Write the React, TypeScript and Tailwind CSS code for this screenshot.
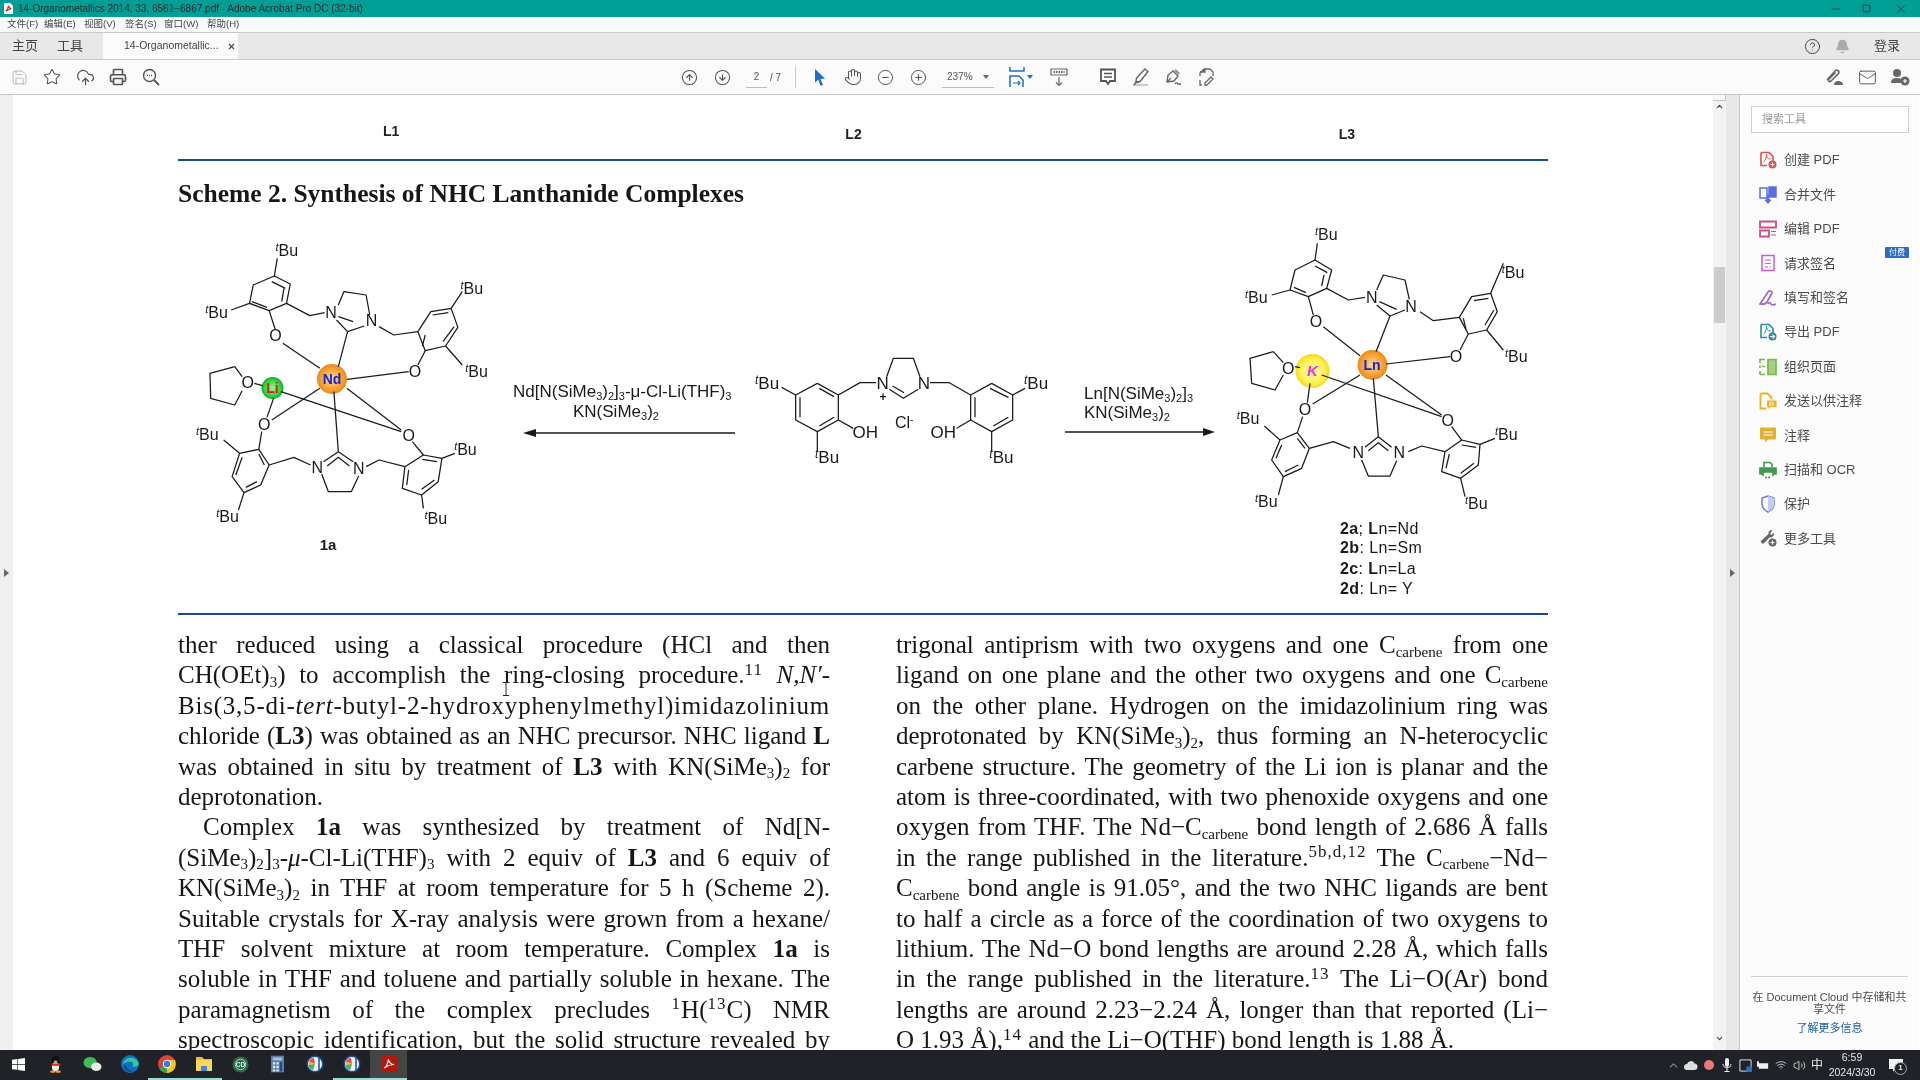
import { ReactNode } from "react";
import {
  Bell,
  ChevronDown,
  ChevronUp,
  CircleArrowDown,
  CircleArrowUp,
  CircleHelp,
  CircleMinus,
  CirclePlus,
  CloudUpload,
  Hand,
  Mail,
  Minus,
  Printer,
  Save,
  Square,
  Star,
  Volume2,
  Wifi,
  X,
} from "lucide-react";

const CJK = "font-['Liberation_Sans','Noto_Sans_CJK_SC',sans-serif]";

type Mapper = (x: number, y: number) => [number, number];
const mapA: Mapper = (x, y) => [170 + x / 2.703, 220 + y / 3];
const mapB: Mapper = (x, y) => [730 + x / 3, 340 + y / 3];
const mapC: Mapper = (x, y) => [1220 + x / 3, 210 + y / 3];

const Bonds = ({ map, lines }: { map: Mapper; lines: number[][] }) => (
  <g fill="none" stroke="#1a1a1a" strokeWidth="1.25" strokeLinejoin="round">
    {lines.map((l, i) => {
      const pts: string[] = [];
      for (let k = 0; k < l.length; k += 2) pts.push(map(l[k], l[k + 1]).join(","));
      return <polyline key={i} points={pts.join(" ")} />;
    })}
  </g>
);

const Atoms = ({ map, items, size = 16 }: { map: Mapper; items: [string, number, number][]; size?: number }) => (
  <g fontSize={size} fill="#1a1a1a">
    {items.map(([t, x, y], i) => {
      const [px, py] = map(x, y);
      if (t === "tBu") {
        return (
          <text key={i} x={px} y={py}>
            <tspan fontSize={size - 5} fontStyle="italic" dy="-5">t</tspan>
            <tspan dy="5">Bu</tspan>
          </text>
        );
      }
      return (
        <text key={i} x={px} y={py} textAnchor="middle">
          {t}
        </text>
      );
    })}
  </g>
);

const molA = [
  [282, 168, 325, 192, 315, 250, 268, 272, 215, 250, 225, 195, 282, 168],
  [275, 185, 312, 205],
  [308, 205, 302, 245],
  [222, 245, 262, 262],
  [282, 168, 290, 115],
  [215, 250, 165, 270],
  [315, 250, 378, 287, 418, 278],
  [455, 255, 470, 215, 530, 225, 540, 285],
  [450, 300, 480, 335, 525, 318],
  [455, 290, 495, 305],
  [268, 272, 285, 330],
  [305, 370, 405, 445],
  [480, 335, 455, 440],
  [565, 320, 605, 345, 670, 335],
  [670, 335, 705, 275, 760, 265, 778, 322, 745, 378, 690, 392, 670, 335],
  [710, 285, 752, 278],
  [768, 320, 738, 365],
  [682, 378, 690, 345],
  [760, 265, 790, 215],
  [745, 378, 790, 435],
  [690, 392, 670, 435],
  [645, 455, 478, 478],
  [175, 440, 108, 460, 110, 535, 175, 555, 195, 512],
  [175, 440, 195, 470],
  [228, 490, 250, 497],
  [280, 535, 262, 592],
  [275, 600, 405, 505],
  [300, 515, 625, 635],
  [478, 505, 625, 630],
  [443, 515, 455, 695],
  [248, 635, 240, 688],
  [240, 688, 268, 735, 245, 795, 200, 818, 168, 770, 188, 700, 240, 688],
  [240, 702, 255, 735],
  [235, 785, 205, 802],
  [178, 765, 195, 712],
  [188, 700, 145, 660],
  [200, 818, 185, 870],
  [268, 735, 335, 712, 380, 735],
  [410, 762, 428, 815, 490, 815, 510, 768],
  [415, 725, 455, 695, 495, 725],
  [425, 738, 455, 712, 485, 738],
  [530, 740, 565, 720, 635, 740],
  [635, 740, 685, 705, 735, 715, 725, 785, 680, 825, 628, 805, 635, 740],
  [682, 718, 722, 725],
  [715, 780, 680, 808],
  [640, 795, 645, 750],
  [655, 665, 685, 705],
  [735, 715, 770, 700],
  [680, 825, 685, 865],
];

const molB = [
  [262, 130, 325, 165, 325, 240, 262, 275, 197, 240, 197, 165, 262, 130],
  [268, 145, 312, 170],
  [312, 232, 268, 258],
  [210, 232, 210, 172],
  [197, 165, 155, 142],
  [262, 275, 262, 335],
  [325, 240, 370, 265],
  [325, 165, 390, 128, 438, 128],
  [470, 110, 490, 55, 550, 55, 570, 110],
  [478, 148, 520, 175, 565, 148],
  [488, 138, 522, 158],
  [600, 128, 658, 128, 722, 165],
  [785, 130, 848, 165, 848, 240, 785, 275, 722, 240, 722, 165, 785, 130],
  [780, 145, 835, 172],
  [835, 232, 790, 258],
  [735, 232, 735, 172],
  [848, 165, 885, 145],
  [785, 275, 785, 335],
  [722, 240, 680, 265],
];

const molC = [
  [285, 150, 335, 180, 320, 235, 265, 260, 210, 240, 225, 180, 285, 150],
  [285, 168, 322, 188],
  [312, 195, 305, 228],
  [222, 232, 258, 248],
  [285, 150, 292, 100],
  [210, 240, 155, 255],
  [320, 235, 385, 270, 435, 262],
  [470, 240, 490, 195, 555, 210, 568, 268],
  [470, 285, 510, 318, 555, 300],
  [478, 275, 530, 298],
  [265, 260, 280, 315],
  [310, 350, 420, 437],
  [510, 318, 468, 425],
  [600, 305, 640, 332, 718, 322],
  [718, 322, 755, 260, 812, 250, 832, 305, 800, 360, 745, 372, 718, 322],
  [762, 272, 805, 265],
  [822, 300, 795, 345],
  [738, 358, 730, 325],
  [812, 250, 850, 160],
  [800, 360, 850, 420],
  [745, 372, 720, 420],
  [690, 440, 498, 462],
  [160, 425, 90, 445, 95, 520, 165, 540, 190, 495],
  [160, 425, 190, 458],
  [225, 470, 240, 473],
  [270, 520, 262, 578],
  [278, 582, 420, 495],
  [305, 495, 665, 620],
  [498, 495, 665, 615],
  [460, 505, 475, 680],
  [248, 620, 232, 668],
  [232, 668, 268, 715, 245, 775, 190, 800, 155, 750, 180, 690, 232, 668],
  [232, 685, 255, 715],
  [235, 765, 195, 785],
  [168, 745, 185, 705],
  [180, 690, 133, 648],
  [190, 800, 175, 855],
  [268, 715, 340, 695, 390, 715],
  [425, 750, 445, 798, 510, 798, 530, 752],
  [435, 712, 475, 680, 515, 712],
  [445, 722, 475, 698, 505, 722],
  [565, 725, 605, 708, 675, 725],
  [675, 725, 725, 690, 780, 703, 775, 765, 722, 805, 665, 785, 675, 725],
  [725, 705, 768, 712],
  [762, 760, 722, 790],
  [678, 775, 688, 732],
  [695, 650, 725, 690],
  [780, 703, 825, 685],
  [722, 805, 735, 860],
];

const SchemeFigure = () => (
  <svg width="1369" height="398" viewBox="178 215 1369 398" className="block font-['Liberation_Sans',sans-serif]">
    <defs>
      <radialGradient id="orange">
        <stop offset="0%" stopColor="#ffd9a0" />
        <stop offset="70%" stopColor="#f7a033" />
        <stop offset="100%" stopColor="#e88a1e" />
      </radialGradient>
      <radialGradient id="green">
        <stop offset="0%" stopColor="#a4f0a0" />
        <stop offset="75%" stopColor="#2fd13a" />
        <stop offset="100%" stopColor="#14a828" />
      </radialGradient>
      <radialGradient id="yellow">
        <stop offset="0%" stopColor="#fffbc0" />
        <stop offset="75%" stopColor="#fff04a" />
        <stop offset="100%" stopColor="#f2d820" />
      </radialGradient>
    </defs>

    <circle cx="332" cy="379" r="15" fill="url(#orange)" />
    <circle cx="272.5" cy="388" r="11" fill="url(#green)" />
    <Bonds map={mapA} lines={molA} />
    <Atoms
      map={mapA}
      items={[
        ["tBu", 285, 108],
        ["tBu", 785, 222],
        ["tBu", 95, 295],
        ["tBu", 798, 472],
        ["tBu", 70, 660],
        ["tBu", 768, 705],
        ["tBu", 125, 905],
        ["tBu", 688, 912],
        ["N", 435, 295],
        ["N", 545, 318],
        ["N", 398, 758],
        ["N", 510, 762],
        ["O", 285, 363],
        ["O", 662, 470],
        ["O", 210, 505],
        ["O", 255, 630],
        ["O", 645, 663],
      ]}
    />
    <text x="332" y="384" textAnchor="middle" fontSize="14" fontWeight="700" fill="#1528c8">Nd</text>
    <text x="272.5" y="393" textAnchor="middle" fontSize="14" fontWeight="700" fill="#d42020">Li</text>
    <text x="328" y="550" textAnchor="middle" fontSize="15" fontWeight="700" fill="#1a1a1a">1a</text>

    <text x="513" y="397" fontSize="17" fill="#1a1a1a">
      Nd[N(SiMe<tspan fontSize="11" dy="3">3</tspan><tspan dy="-3">)</tspan><tspan fontSize="11" dy="3">2</tspan><tspan dy="-3">]</tspan><tspan fontSize="11" dy="3">3</tspan><tspan dy="-3">-μ-Cl-Li(THF)</tspan><tspan fontSize="11" dy="3">3</tspan>
    </text>
    <text x="573" y="417" fontSize="17" fill="#1a1a1a">
      KN(SiMe<tspan fontSize="11" dy="3">3</tspan><tspan dy="-3">)</tspan><tspan fontSize="11" dy="3">2</tspan>
    </text>
    <line x1="735" y1="433" x2="530" y2="433" stroke="#1a1a1a" strokeWidth="1.6" />
    <polygon points="523,433 536,429 536,437" fill="#1a1a1a" />

    <Bonds map={mapB} lines={molB} />
    <Atoms
      map={mapB}
      size={17}
      items={[
        ["tBu", 75, 148],
        ["tBu", 882, 148],
        ["tBu", 255, 368],
        ["tBu", 778, 368],
        ["N", 458, 148],
        ["N", 582, 148],
        ["OH", 406, 294],
        ["OH", 640, 294],
      ]}
    />
    <text x="883" y="401" textAnchor="middle" fontSize="12" fontWeight="700" fill="#1a1a1a">+</text>
    <text x="895" y="428" fontSize="16" fill="#1a1a1a">
      Cl<tspan fontSize="10" dy="-5">-</tspan>
    </text>

    <text x="1084" y="399" fontSize="17" fill="#1a1a1a">
      Ln[N(SiMe<tspan fontSize="11" dy="3">3</tspan><tspan dy="-3">)</tspan><tspan fontSize="11" dy="3">2</tspan><tspan dy="-3">]</tspan><tspan fontSize="11" dy="3">3</tspan>
    </text>
    <text x="1084" y="418" fontSize="17" fill="#1a1a1a">
      KN(SiMe<tspan fontSize="11" dy="3">3</tspan><tspan dy="-3">)</tspan><tspan fontSize="11" dy="3">2</tspan>
    </text>
    <line x1="1065" y1="432" x2="1208" y2="432" stroke="#1a1a1a" strokeWidth="1.6" />
    <polygon points="1215,432 1203,428 1203,436" fill="#1a1a1a" />

    <circle cx="1372.5" cy="365" r="15" fill="url(#orange)" />
    <circle cx="1312.5" cy="371" r="17" fill="url(#yellow)" />
    <Bonds map={mapC} lines={molC} />
    <Atoms
      map={mapC}
      items={[
        ["tBu", 285, 90],
        ["tBu", 845, 205],
        ["tBu", 75, 278],
        ["tBu", 855, 455],
        ["tBu", 50, 643],
        ["tBu", 825, 690],
        ["tBu", 105, 890],
        ["tBu", 735, 897],
        ["N", 455, 280],
        ["N", 573, 305],
        ["N", 415, 745],
        ["N", 538, 745],
        ["O", 288, 350],
        ["O", 708, 455],
        ["O", 205, 492],
        ["O", 255, 615],
        ["O", 683, 647],
      ]}
    />
    <text x="1372" y="370" textAnchor="middle" fontSize="14" fontWeight="700" fill="#1528c8">Ln</text>
    <text x="1312.5" y="376" textAnchor="middle" fontSize="15" fontWeight="700" fontStyle="italic" fill="#f030d0">K</text>
    <g fontSize="16" fill="#1a1a1a" letterSpacing="0.4">
      <text x="1340" y="534"><tspan fontWeight="700">2a</tspan>; <tspan fontWeight="700">L</tspan>n=Nd</text>
      <text x="1340" y="553"><tspan fontWeight="700">2b</tspan>: Ln=Sm</text>
      <text x="1340" y="574"><tspan fontWeight="700">2c</tspan>: <tspan fontWeight="700">L</tspan>n=La</text>
      <text x="1340" y="594"><tspan fontWeight="700">2d</tspan>: Ln= Y</text>
    </g>
  </svg>
);

const TextLine = ({ children, last, indent, stretch }: { children: ReactNode; last?: boolean; indent?: boolean; stretch?: boolean }) => (
  <div
    className={
      "h-[30.4px] whitespace-nowrap leading-[30.4px] text-[25px] " +
      (last ? "text-left " : "text-justify [text-align-last:justify] ") +
      (indent ? "pl-[25px] " : "") +
      (stretch ? "tracking-[0.78px]" : "")
    }
  >
    {children}
  </div>
);

const S = ({ children }: { children: ReactNode }) => <sub className="text-[15px]">{children}</sub>;
const U = ({ children }: { children: ReactNode }) => <sup className="text-[17px] tracking-[1px]">{children}</sup>;

const LeftColumn = () => (
  <div className="w-[652px]">
    <TextLine>ther reduced using a classical procedure (HCl and then</TextLine>
    <TextLine>CH(OEt)<S>3</S>) to accomplish the ring-closing procedure.<U>11</U> <i>N,N′</i>-</TextLine>
    <TextLine stretch>Bis(3,5-di-<i>tert</i>-butyl-2-hydroxyphenylmethyl)imidazolinium</TextLine>
    <TextLine>chloride (<b>L3</b>) was obtained as an NHC precursor. NHC ligand <b>L</b></TextLine>
    <TextLine>was obtained in situ by treatment of <b>L3</b> with KN(SiMe<S>3</S>)<S>2</S> for</TextLine>
    <TextLine last>deprotonation.</TextLine>
    <TextLine indent>Complex <b>1a</b> was synthesized by treatment of Nd[N-</TextLine>
    <TextLine>(SiMe<S>3</S>)<S>2</S>]<S>3</S>-<i>μ</i>-Cl-Li(THF)<S>3</S> with 2 equiv of <b>L3</b> and 6 equiv of</TextLine>
    <TextLine>KN(SiMe<S>3</S>)<S>2</S> in THF at room temperature for 5 h (Scheme 2).</TextLine>
    <TextLine>Suitable crystals for X-ray analysis were grown from a hexane/</TextLine>
    <TextLine>THF solvent mixture at room temperature. Complex <b>1a</b> is</TextLine>
    <TextLine>soluble in THF and toluene and partially soluble in hexane. The</TextLine>
    <TextLine>paramagnetism of the complex precludes <U>1</U>H(<U>13</U>C) NMR</TextLine>
    <TextLine>spectroscopic identification, but the solid structure revealed by</TextLine>
  </div>
);

const RightColumn = () => (
  <div className="w-[652px]">
    <TextLine>trigonal antiprism with two oxygens and one C<S>carbene</S> from one</TextLine>
    <TextLine>ligand on one plane and the other two oxygens and one C<S>carbene</S></TextLine>
    <TextLine>on the other plane. Hydrogen on the imidazolinium ring was</TextLine>
    <TextLine>deprotonated by KN(SiMe<S>3</S>)<S>2</S>, thus forming an N-heterocyclic</TextLine>
    <TextLine>carbene structure. The geometry of the Li ion is planar and the</TextLine>
    <TextLine>atom is three-coordinated, with two phenoxide oxygens and one</TextLine>
    <TextLine>oxygen from THF. The Nd−C<S>carbene</S> bond length of 2.686 Å falls</TextLine>
    <TextLine>in the range published in the literature.<U>5b,d,12</U> The C<S>carbene</S>−Nd−</TextLine>
    <TextLine>C<S>carbene</S> bond angle is 91.05°, and the two NHC ligands are bent</TextLine>
    <TextLine>to half a circle as a force of the coordination of two oxygens to</TextLine>
    <TextLine>lithium. The Nd−O bond lengths are around 2.28 Å, which falls</TextLine>
    <TextLine>in the range published in the literature.<U>13</U> The Li−O(Ar) bond</TextLine>
    <TextLine>lengths are around 2.23−2.24 Å, longer than that reported (Li−</TextLine>
    <TextLine last>O 1.93 Å),<U>14</U> and the Li−O(THF) bond length is 1.88 Å.</TextLine>
  </div>
);

const Doc = ({ stroke, children }: { stroke: string; children?: ReactNode }) => (
  <svg viewBox="0 0 18 18" className="h-[18px] w-[18px]" fill="none" stroke={stroke} strokeWidth="1.6">
    <path d="M2 1.5h8l4 4v5M2 1.5v13h6" />
    {children}
  </svg>
);

const toolIcons: ReactNode[] = [
  <Doc key="c" stroke="#d9534f">
    <path d="M4.5 11c2-1 3-5 3-8 0 3 1 5 4 5" strokeWidth="1" />
    <circle cx="13.5" cy="13.5" r="4" fill="#d9534f" stroke="none" />
    <path d="M11.5 13.5h4M13.5 11.5v4" stroke="#fff" strokeWidth="1.2" />
  </Doc>,
  <svg key="m" viewBox="0 0 18 18" className="h-[18px] w-[18px]" fill="none" stroke="#5b6ee1" strokeWidth="1.5">
    <path d="M1 2h7v10H1z" />
    <path d="M10 1h7v10h-7z" fill="#5b6ee1" />
    <path d="M9 9v7M6.5 13.5 9 16.5l2.5-3" strokeWidth="2" />
  </svg>,
  <svg key="e" viewBox="0 0 18 18" className="h-[18px] w-[18px]" fill="none" stroke="#c94f87" strokeWidth="1.8">
    <path d="M1 1.5h16v6H1zM1 10.5h9v6H1z" />
    <path d="M12 11.5h5M12 15h5" strokeWidth="1" />
  </svg>,
  <svg key="r" viewBox="0 0 18 18" className="h-[18px] w-[18px]" fill="none" stroke="#c65cc6" strokeWidth="1.5">
    <path d="M3 1.5h12v15H3z" />
    <path d="M6 6h6M6 9.5h6M6 13h3M11 13h1" strokeWidth="1.2" />
  </svg>,
  <svg key="f" viewBox="0 0 18 18" className="h-[18px] w-[18px]" fill="none" stroke="#9a6bc9" strokeWidth="1.7">
    <path d="M1 15 9 3c1.5-2 4-1 4 1l-5 9c-1 2-4 2.5-7 2z" />
    <path d="M9 15c1-2 2-2 3 0s2 1 5 0" />
  </svg>,
  <Doc key="x" stroke="#2a8c9e">
    <path d="M4.5 11c2-1 3-5 3-8 0 3 1 5 4 5" strokeWidth="1" />
    <circle cx="13.5" cy="13.5" r="4" fill="#2a8c9e" stroke="none" />
    <path d="M11 13.5h4.5M13.5 11.500l2 2-2 2" stroke="#fff" strokeWidth="1.1" />
  </Doc>,
  <svg key="o" viewBox="0 0 18 18" className="h-[18px] w-[18px]" fill="none" stroke="#7ab648" strokeWidth="1.7">
    <path d="M9 1.5h8v15H9z" fill="#a5d07e" />
    <path d="M1 5V1.5h5M1 10V7.500M1 16.500h5M1 16.500V13M3 8.500h3" />
  </svg>,
  <svg key="s" viewBox="0 0 18 18" className="h-[18px] w-[18px]" fill="none" stroke="#e6b422" strokeWidth="1.8">
    <path d="M1.5 1.5h7l4 4v2M1.500 1.500v15h6" />
    <path d="M8 8.500h9.500v6.500h-6l-2 2v-2H8z" fill="#e6b422" stroke="none" />
    <path d="M10 11h5M10 13h5" stroke="#fff" strokeWidth="1" />
  </svg>,
  <svg key="n" viewBox="0 0 18 18" className="h-[18px] w-[18px]">
    <path d="M2 1.500h14a1 1 0 0 1 1 1v10a1 1 0 0 1-1 1H9l-3 3v-3H2a1 1 0 0 1-1-1v-10a1 1 0 0 1 1-1z" fill="#e0b030" />
    <path d="M4.500 6h9M4.500 9h9" stroke="#fff" strokeWidth="1.2" />
  </svg>,
  <svg key="p" viewBox="0 0 18 18" className="h-[18px] w-[18px]" fill="none" stroke="#3f9b50" strokeWidth="1.7">
    <path d="M5 6V1.500h6l2 2V6" />
    <path d="M1 7h16v6h-3v-2H4v2H1z" fill="#3f9b50" />
    <path d="M4 13v3M14 13v3M6 16.500h6" strokeDasharray="2 1" />
  </svg>,
  <svg key="t" viewBox="0 0 18 18" className="h-[18px] w-[18px]" fill="none" stroke="#6b7de0" strokeWidth="1.5">
    <path d="M9 1 3 3v6c0 4 3 6.500 6 8 3-1.500 6-4 6-8V3z" />
    <path d="M9 1v16c3-1.500 6-4 6-8V3z" fill="#c5ccf3" stroke="none" />
  </svg>,
  <svg key="w" viewBox="0 0 18 18" className="h-[18px] w-[18px]" fill="#666">
    <path d="M13 1c-2.500 0-4 2-3.500 4L1.500 12.500 4 15l6.500-6.500c2 .5 4.500-1 4.500-3.500 0-.5 0-1-.2-1.300L12.500 6 11 4.500 13.500 1.200C13.300 1 13.200 1 13 1z" />
    <circle cx="13.500" cy="13.500" r="4" />
    <path d="M11.500 13.500h4M13.500 11.500v4" stroke="#fff" strokeWidth="1.2" />
  </svg>,
];

const tools = [
  "创建 PDF",
  "合并文件",
  "编辑 PDF",
  "请求签名",
  "填写和签名",
  "导出 PDF",
  "组织页面",
  "发送以供注释",
  "注释",
  "扫描和 OCR",
  "保护",
  "更多工具",
];

const ToolsPanel = () => (
  <aside className={"relative flex w-[180px] flex-col border-l border-[#c8c8c8] bg-[#fcfcfc] " + CJK}>
    <div className="mx-[11px] mt-[11px] flex h-[27px] w-[158px] items-center border border-[#cfcfcf] bg-white pl-[10px] text-[11px] text-[#9a9a9a]">
      搜索工具
    </div>
    <div className="mt-[10px] flex flex-col">
      {tools.map((t, i) => (
        <div key={t} className="relative flex h-[34.4px] items-center gap-[7px] pl-[19px] text-[13px] text-[#4b4b4b]">
          {toolIcons[i]}
          <span>{t}</span>
          {i === 3 && (
            <span className="absolute right-[10px] top-[1px] flex h-[11px] w-[24px] items-center justify-center rounded-[1px] bg-[#2a6fc4] text-[8px] text-white">
              付费
            </span>
          )}
        </div>
      ))}
    </div>
    <div className="mx-[11px] mt-auto border-t border-[#cfcfcf] pb-[16px] pt-[14px] text-center text-[11px] leading-[12.5px] text-[#4b4b4b]">
      <p>在 Document Cloud 中存储和共</p>
      <p>享文件</p>
      <p className="mt-[6px] text-[#1c5fa8]">了解更多信息</p>
    </div>
  </aside>
);

const Ico = ({ children }: { children: ReactNode }) => (
  <span className="flex h-5 w-5 items-center justify-center">{children}</span>
);

const Toolbar = () => (
  <div className={"flex h-[35px] items-center border-b border-[#c8c8c8] bg-[#fbfbfb] text-[#555] " + CJK}>
    <div className="ml-[9px] flex gap-[13px]">
      <Ico><Save size={17} strokeWidth={1.3} className="text-[#b5b5b5]" /></Ico>
      <Ico><Star size={18} strokeWidth={1.4} /></Ico>
      <Ico><CloudUpload size={19} strokeWidth={1.5} /></Ico>
      <Ico><Printer size={18} strokeWidth={2.2} /></Ico>
      <Ico>
        <svg viewBox="0 0 18 18" className="h-[18px] w-[18px]" fill="none" stroke="#555" strokeWidth="1.4">
          <circle cx="7.5" cy="7.5" r="6" />
          <path d="M12 12l5 5" strokeWidth="2" />
          <path d="M5 7.500h5" strokeDasharray="1 1" />
        </svg>
      </Ico>
    </div>
    <div className="ml-[518px] flex gap-[13px]">
      <Ico><CircleArrowUp size={17} strokeWidth={1.5} /></Ico>
      <Ico><CircleArrowDown size={17} strokeWidth={1.5} /></Ico>
    </div>
    <div className="ml-[14px] h-[21px] w-[21px] border-b border-[#bdbdbd] text-center text-[10px] leading-[20px]">2</div>
    <div className="ml-[3px] w-[12px] whitespace-nowrap text-[10px]">/ 7</div>
    <div className="ml-[13px] h-[22px] w-px bg-[#c8c8c8]" />
    <div className="ml-[14px] flex gap-[13px]">
      <Ico>
        <svg viewBox="0 0 14 18" className="h-[18px] w-[14px]" fill="#1f6fc4">
          <path d="M2 1l10 9.500-4.500.5 2.500 6-2.500 .8-2.200-6L2 14.500z" />
        </svg>
      </Ico>
      <Ico><Hand size={18} strokeWidth={1.4} /></Ico>
    </div>
    <div className="ml-[12px] flex gap-[13px]">
      <Ico><CircleMinus size={17} strokeWidth={1.4} /></Ico>
      <Ico><CirclePlus size={17} strokeWidth={1.4} /></Ico>
    </div>
    <div className="ml-[14px] flex h-[21px] w-[52px] items-center justify-between border-b border-[#bdbdbd] pl-[5px] pr-[5px] text-[10px]">
      <span>237%</span>
      <span className="h-0 w-0 border-x-[3px] border-t-[4px] border-x-transparent border-t-[#666]" />
    </div>
    <div className="ml-[13px]">
      <Ico>
        <svg viewBox="0 0 16 20" className="h-5 w-4" fill="none" stroke="#1f6fc4" strokeWidth="1.5">
          <path d="M1 0v4h14V0M1 20V9h9l4 4v7" />
          <path d="M4 16h7M9 14l2 2-2 2" strokeWidth="1.1" />
        </svg>
      </Ico>
    </div>
    <span className="h-0 w-0 border-x-[3px] border-t-[4px] border-x-transparent border-t-[#1f6fc4]" />
    <div className="ml-[16px]">
      <Ico>
        <svg viewBox="0 0 18 20" className="h-5 w-[18px]" fill="none" stroke="#666" strokeWidth="1.2">
          <path d="M1 2h16v6H1z" />
          <path d="M3.500 5h11" strokeDasharray="1.500 1" strokeWidth="2" />
          <path d="M9 10v8M6 15.500l3 3 3-3" />
        </svg>
      </Ico>
    </div>
    <div className="ml-[29px]">
      <Ico>
        <svg viewBox="0 0 18 18" className="h-[18px] w-[18px]" fill="none" stroke="#555" strokeWidth="1.8">
          <path d="M2 1.500h14v11.500h-5l-2 3-2-3H2z" />
          <path d="M5 5.500h8M5 9h8" strokeWidth="1.3" />
        </svg>
      </Ico>
    </div>
    <div className="ml-[13px]">
      <Ico>
        <svg viewBox="0 0 18 18" className="h-[18px] w-[18px]" fill="none" stroke="#666" strokeWidth="1.4">
          <path d="M13 1l3 2.500-8 10L4 14l.5-4z" />
          <path d="M1 17h15" stroke="#ccc" strokeWidth="2" />
          <path d="M2 17l2-3h3" fill="#666" />
        </svg>
      </Ico>
    </div>
    <div className="ml-[12px]">
      <Ico>
        <svg viewBox="0 0 18 18" className="h-[18px] w-[18px]" fill="none" stroke="#666" strokeWidth="1.4">
          <path d="M9 3 4 7l-1 7 7-1 4-5zM3 14l4-4" />
          <path d="M11 2l4 4" strokeWidth="2.5" stroke="#999" />
          <path d="M11 16c1-1.500 2-1.500 3 0h3" />
        </svg>
      </Ico>
    </div>
    <div className="ml-[14px]">
      <Ico>
        <svg viewBox="0 0 18 18" className="h-[18px] w-[18px]" fill="none" stroke="#666" strokeWidth="1.3">
          <path d="M2 8V5l4-4h6l3 3v4M4 17h-2v-5M15 11l-6 6h-2v-2l6-6z" />
          <path d="M2 4h5V1" fill="#666" />
        </svg>
      </Ico>
    </div>
    <div className="ml-auto mr-[10px] flex gap-[13px]">
      <Ico>
        <svg viewBox="0 0 20 18" className="h-[18px] w-5" fill="none" stroke="#666" strokeWidth="1.6">
          <path d="M3 12 11 3c2-2 5 0 3.500 2.500L7 13c-1.500 1.500-3.500-.5-2-2l6.500-6.500" />
          <path d="M10 17c0-3 2-4 4-4s5 1 5 4z" fill="#666" stroke="none" />
        </svg>
      </Ico>
      <Ico><Mail size={19} strokeWidth={1.2} /></Ico>
      <Ico>
        <svg viewBox="0 0 20 18" className="h-[18px] w-5" fill="#666">
          <circle cx="7" cy="5" r="4" />
          <path d="M1 15c0-4 3-5 6-5s4 1 5 2v3z" />
          <circle cx="15" cy="13" r="4.500" />
          <path d="M13 13h4M15 11v4" stroke="#fff" strokeWidth="1.2" />
        </svg>
      </Ico>
    </div>
  </div>
);

const TrayGlyph = ({ children }: { children: ReactNode }) => (
  <span className="flex w-[18px] items-center justify-center">{children}</span>
);

const TaskSlot = ({ children, running, active }: { children: ReactNode; running?: boolean; active?: boolean }) => (
  <div
    className={
      "flex h-[30px] w-[37px] items-center justify-center border-b-2 " +
      (running ? "border-[#9adcd4] " : "border-transparent ") +
      (active ? "bg-[#454545]" : "")
    }
  >
    {children}
  </div>
);

const PieLogo = () => (
  <svg viewBox="0 0 18 18" className="h-[18px] w-[18px]">
    <circle cx="9" cy="9" r="8.500" fill="#1b4f9c" />
    <circle cx="9" cy="9" r="7" fill="#f4f4f4" />
    <path d="M9 9 3 6.500C4 4 6 3 8 3z" fill="#e44d3a" />
    <path d="M9 9 3 6.500 2.500 10z" fill="#f2b134" />
    <path d="M9 9 2.500 10C3 13 5 14.500 7 15z" fill="#4caf50" />
    <path d="M13 3v12" stroke="#1b4f9c" strokeWidth="1.5" />
  </svg>
);

const Taskbar = () => (
  <div className={"flex h-[30px] items-center bg-[#1f2327] text-white " + CJK}>
    <TaskSlot>
      <svg viewBox="0 0 14 14" className="h-[13px] w-[13px]" fill="#fff">
        <path d="M0 2l5.800-.8v5.300H0zM6.500 1.100 14 0v6.500H6.500zM0 7.300h5.800v5.400L0 12zM6.500 7.300H14V14l-7.500-1z" />
      </svg>
    </TaskSlot>
    <TaskSlot>
      <svg viewBox="0 0 16 20" className="h-[18px] w-[15px]">
        <ellipse cx="8" cy="8" rx="5" ry="7" fill="#111" />
        <ellipse cx="8" cy="13" rx="4" ry="5" fill="#f5f5f5" />
        <path d="M3 9.500h10l1 2-3 .5H4z" fill="#d8261c" />
        <ellipse cx="5" cy="18.500" rx="3" ry="1.300" fill="#f0a020" />
        <ellipse cx="11" cy="18.500" rx="3" ry="1.300" fill="#f0a020" />
        <ellipse cx="8" cy="7" rx="2" ry="1" fill="#f0a020" />
      </svg>
    </TaskSlot>
    <TaskSlot>
      <svg viewBox="0 0 20 18" className="h-[17px] w-[19px]">
        <ellipse cx="7.500" cy="7" rx="7" ry="6" fill="#3ebc55" />
        <ellipse cx="14" cy="11.500" rx="5.500" ry="4.500" fill="#eaeaea" />
      </svg>
    </TaskSlot>
    <TaskSlot>
      <svg viewBox="0 0 18 18" className="h-[18px] w-[18px]">
        <circle cx="9" cy="9" r="9" fill="#0f6fc0" />
        <path d="M2 9C3 2 14 0 17.500 8c.5 3-3 4.500-6 3.500 2-2 0-5-3-5S3 8 2 9z" fill="#35c5a0" />
        <path d="M5 9c-.5 4 3.500 7.500 8 6.500-4 3-9.500 .5-10.500-4z" fill="#0a4a90" />
      </svg>
    </TaskSlot>
    <TaskSlot running>
      <svg viewBox="0 0 18 18" className="h-[18px] w-[18px]">
        <circle cx="9" cy="9" r="9" fill="#d9453a" />
        <path d="M9 9 1.200 13.500A9 9 0 0 0 9 18c1 0 1.500 0 2-.2z" fill="#3ba34d" />
        <path d="M9 5h7.800A9 9 0 0 1 9 18z" fill="#f5c518" />
        <circle cx="9" cy="9" r="4.200" fill="#fff" />
        <circle cx="9" cy="9" r="3.200" fill="#3b7ddd" />
      </svg>
    </TaskSlot>
    <TaskSlot running>
      <svg viewBox="0 0 18 16" className="h-[16px] w-[18px]">
        <path d="M1 1h6l2 2h8v2H1z" fill="#f5b83d" />
        <path d="M1 4h16v11H1z" fill="#fbd35f" />
        <path d="M6 10h6v5H6z" fill="#3b8ad8" />
      </svg>
    </TaskSlot>
    <TaskSlot>
      <svg viewBox="0 0 18 18" className="h-[17px] w-[17px]">
        <circle cx="9" cy="9" r="8.500" fill="#2a6a4a" />
        <circle cx="9" cy="9" r="5.500" fill="none" stroke="#b5d8c0" strokeWidth="1" />
        <text x="9" y="11.500" textAnchor="middle" fontSize="7" fontWeight="700" fill="#dff0e5">CD</text>
      </svg>
    </TaskSlot>
    <TaskSlot>
      <svg viewBox="0 0 14 18" className="h-[18px] w-[13px]">
        <path d="M0 0h14v18H0z" fill="#5b7fa8" />
        <path d="M2 2h10v3H2z" fill="#a9c1da" />
        <path d="M2 7h2.500v2.500H2zM5.800 7h2.500v2.500H5.800zM2 11h2.500v2.500H2zM5.800 11h2.500v2.500H5.800zM2 14.800h2.500V17H2zM5.800 14.800h2.500V17H5.800z" fill="#e3ebf3" />
        <path d="M9.500 7H12v10H9.500z" fill="#1d4c86" />
      </svg>
    </TaskSlot>
    <TaskSlot><PieLogo /></TaskSlot>
    <TaskSlot running><PieLogo /></TaskSlot>
    <TaskSlot running active>
      <svg viewBox="0 0 16 16" className="h-4 w-4">
        <rect width="16" height="16" rx="2" fill="#b3180c" />
        <path d="M3 12c2-1 4-5 4.500-9 .5 3 2 5.500 5.500 5.500-3 0-6 1-10 3.500z" fill="none" stroke="#fff" strokeWidth="1.2" />
      </svg>
    </TaskSlot>

    <div className="ml-auto flex h-full items-center text-[#e6e6e6]">
      <TrayGlyph><ChevronUp size={13} strokeWidth={1.5} /></TrayGlyph>
      <TrayGlyph>
        <svg viewBox="0 0 14 9" className="h-[9px] w-[14px]" fill="#ddd">
          <path d="M3 9a3 3 0 0 1 0-6 4 4 0 0 1 7.500-.5A3.300 3.300 0 0 1 11 9z" />
        </svg>
      </TrayGlyph>
      <TrayGlyph>
        <span className="h-[10px] w-[10px] rounded-full bg-[#e87a7a]" />
      </TrayGlyph>
      <TrayGlyph>
        <svg viewBox="0 0 10 14" className="h-[14px] w-[10px]" fill="#eee">
          <rect x="3" width="4" height="9" rx="2" />
          <path d="M1 6c0 5 8 5 8 0M5 10v3M2.500 13.500h5" fill="none" stroke="#eee" />
        </svg>
      </TrayGlyph>
      <TrayGlyph>
        <svg viewBox="0 0 14 14" className="h-[13px] w-[13px]" fill="none" stroke="#eee">
          <path d="M1 1h12v12H1z" />
          <rect x="8" y="8" width="6" height="6" fill="#2a6fc4" stroke="none" />
        </svg>
      </TrayGlyph>
      <TrayGlyph>
        <svg viewBox="0 0 14 10" className="h-[10px] w-[13px]" fill="#eee">
          <path d="M0 1h2v2h10v6H2V7H0z" />
        </svg>
      </TrayGlyph>
      <TrayGlyph><Wifi size={12} strokeWidth={1.5} /></TrayGlyph>
      <TrayGlyph><Volume2 size={13} strokeWidth={1.5} /></TrayGlyph>
      <span className="w-[18px] text-center text-[12px]">中</span>
      <div className="w-[52px] whitespace-nowrap text-center text-[10.5px] leading-[15px]">
        <p>6:59</p>
        <p>2024/3/30</p>
      </div>
      <div className="relative ml-[8px] mr-[14px] flex w-[20px] justify-center">
        <svg viewBox="0 0 14 13" className="h-[13px] w-[14px]" fill="#f2f2f2">
          <path d="M0 0h14v10H6l-2 3v-3H0z" />
        </svg>
        <span className="absolute left-[8px] top-[3px] flex h-[13px] w-[13px] items-center justify-center rounded-full border border-[#aaa] bg-[#1f2327] text-[8px] font-bold">
          1
        </span>
      </div>
    </div>
  </div>
);

const App = () => (
  <div className="flex h-screen w-screen flex-col overflow-hidden bg-white blur-[0.35px]">
    <div className={"flex h-[17px] items-center bg-[#009e94] text-[10px] text-[#2a2a2a] " + CJK}>
      <svg viewBox="0 0 10 12" className="ml-[4px] h-[11px] w-[9px]">
        <path d="M0 0h7l3 3v9H0z" fill="#f4f4f4" />
        <path d="M2 9c1.500-1 2.500-3 3-6 0 2 1 3 3 3z" fill="none" stroke="#c8281c" strokeWidth="1.2" />
      </svg>
      <span className="ml-[5px] whitespace-nowrap">14-Organometallics 2014, 33, 6561−6867.pdf - Adobe Acrobat Pro DC (32-bit)</span>
      <div className="ml-auto mr-[12px] flex gap-[19px]">
        <Minus size={14} strokeWidth={1.2} />
        <Square size={9} strokeWidth={2.2} className="mt-[2px]" />
        <X size={14} strokeWidth={1.2} className="ml-[4px]" />
      </div>
    </div>

    <div className={"flex h-[16px] items-center gap-[7px] whitespace-nowrap border-b border-[#c8c8c8] bg-[#fafafa] pl-[7px] text-[9.5px] text-[#444] " + CJK}>
      <span className="w-[30px]">文件(F)</span>
      <span className="w-[33px]">编辑(E)</span>
      <span className="w-[34px]">视图(V)</span>
      <span className="w-[32px]">签名(S)</span>
      <span className="w-[36px]">窗口(W)</span>
      <span>帮助(H)</span>
    </div>

    <div className={"flex h-[27px] items-stretch border-b border-[#c8c8c8] bg-[#e8e8e8] text-[#444] " + CJK}>
      <span className="ml-[12px] self-center text-[13px]">主页</span>
      <span className="ml-[19px] self-center text-[13px]">工具</span>
      <div className="ml-[20px] flex w-[135px] items-center whitespace-nowrap bg-[#fbfbfb] pl-[21px] text-[10.5px]">
        <span>14-Organometallic...</span>
        <X size={9} strokeWidth={3} className="ml-[8px]" />
      </div>
      <div className="ml-auto flex items-center">
        <CircleHelp size={17} strokeWidth={1.4} />
        <Bell size={15} fill="#aaa" className="ml-[14px] text-[#aaa]" />
        <span className="ml-[24px] mr-[20px] text-[13px]">登录</span>
      </div>
    </div>

    <Toolbar />

    <div className="flex min-h-0 flex-1">
      <div className="flex w-[13px] items-center justify-center bg-[#f0f0f0]">
        <span className="h-0 w-0 border-y-[4px] border-l-[5px] border-y-transparent border-l-[#666]" />
      </div>

      <main className="relative w-[1700px] min-w-0 flex-none overflow-hidden bg-white pl-[165px] font-['Liberation_Serif',serif] text-[#161616]">
        <div className="w-[1370px]">
          <div className="flex h-[64px] font-['Liberation_Sans',sans-serif] text-[14px] font-bold text-[#222]">
            <span className="ml-[205px] mt-[26px]">L1</span>
            <span className="ml-[446px] mt-[29px]">L2</span>
            <span className="ml-[477px] mt-[29px]">L3</span>
          </div>
          <div className="h-[2px] bg-[#1a4a8c]" />
          <h2 className="h-[54px] pt-[18px] text-[25.5px] font-bold leading-[30px]">
            Scheme 2. Synthesis of NHC Lanthanide Complexes
          </h2>
          <SchemeFigure />
          <div className="h-[2px] bg-[#1a4a8c]" />
          <div className="mt-[15px] flex justify-between">
            <LeftColumn />
            <RightColumn />
          </div>
        </div>
        <svg viewBox="0 0 8 14" className="absolute left-[489px] top-[587px] h-[14px] w-[8px]" fill="none" stroke="#222" strokeWidth="1">
          <path d="M1 .5h6M1 13.500h6M4 .5v13" />
        </svg>
      </main>

      <div className="relative flex w-[13px] flex-col items-center justify-between bg-[#f3f3f3] py-[7px] text-[#444]">
        <div className="absolute left-0 top-0 h-[6px] w-[13px] border-b border-r border-[#c8c8c8] bg-[#f8f8f8]" />
        <ChevronUp size={9} strokeWidth={3} />
        <div className="absolute left-[1px] top-[172px] h-[56px] w-[11px] bg-[#cdcdcd]" />
        <ChevronDown size={9} strokeWidth={3} />
      </div>
      <div className="flex w-[13px] items-center justify-center bg-[#e8e8e8]">
        <span className="h-0 w-0 border-y-[4px] border-l-[5px] border-y-transparent border-l-[#666]" />
      </div>

      <ToolsPanel />
    </div>

    <Taskbar />
  </div>
);

export default App;
